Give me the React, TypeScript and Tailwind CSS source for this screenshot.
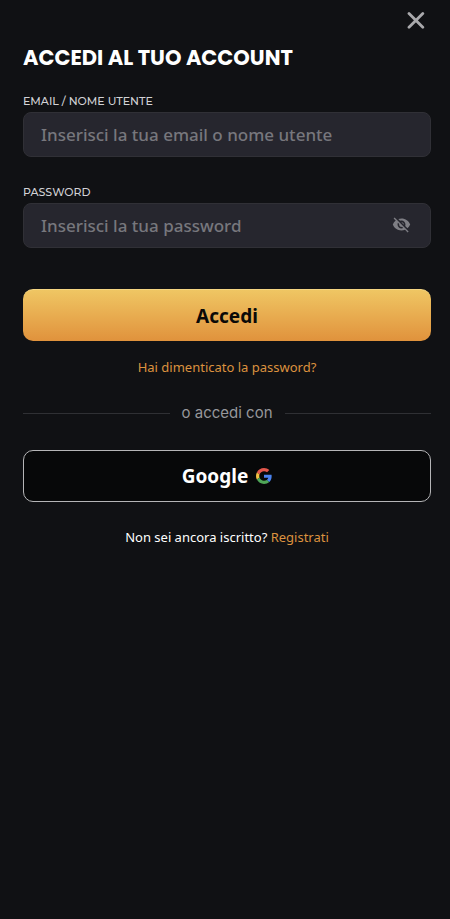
import React, { useState } from "react";
import { MdVisibility, MdVisibilityOff } from "react-icons/md";

const inputStyle =
  "block w-full h-[45px] rounded-lg border border-[#303036] bg-[#26262e] pl-[17px] text-[17px] font-medium text-white placeholder:text-[#77777d] placeholder:opacity-100 focus:outline-none focus:border-[#e0943f]";

const labelStyle =
  "block h-[22px] text-[11px] leading-[22px] font-medium font-['Montserrat','Inter',sans-serif] text-[#d2d2d6] uppercase";

const GoogleLogo = () => (
  <svg viewBox="0 0 48 48" className="w-4 h-4" aria-hidden="true">
    <path
      fill="#E2574C"
      d="M24 9.5c3.54 0 6.71 1.22 9.21 3.6l6.85-6.85C35.9 2.38 30.47 0 24 0 14.62 0 6.51 5.38 2.56 13.22l7.98 6.19C12.43 13.72 17.74 9.5 24 9.5z"
    />
    <path
      fill="#4A82EE"
      d="M46.98 24.55c0-1.57-.15-3.09-.38-4.55H24v9.02h12.94c-.58 2.96-2.26 5.48-4.78 7.18l7.73 6c4.51-4.18 7.09-10.36 7.09-17.65z"
    />
    <path
      fill="#F3C143"
      d="M10.53 28.59c-.48-1.45-.76-2.99-.76-4.59s.27-3.14.76-4.59l-7.98-6.19C.92 16.46 0 20.12 0 24c0 3.88.92 7.54 2.56 10.78l7.97-6.19z"
    />
    <path
      fill="#4FA658"
      d="M24 48c6.48 0 11.93-2.13 15.89-5.81l-7.73-6c-2.15 1.45-4.92 2.3-8.16 2.3-6.26 0-11.57-4.22-13.47-9.91l-7.98 6.19C6.51 42.62 14.62 48 24 48z"
    />
  </svg>
);

const App = () => {
  const [username, setUsername] = useState("");
  const [password, setPassword] = useState("");
  const [showPassword, setShowPassword] = useState(false);

  return (
    <div className="min-h-screen bg-[#101114] font-['Noto_Sans',sans-serif]">
      <div className="flex justify-end h-10 pr-[25px]">
        <button type="button" aria-label="Chiudi" className="cursor-pointer">
          <svg
            viewBox="0 0 18 18"
            className="w-[18px] h-[18px]"
            stroke="#a9a9ac"
            strokeWidth="2.8"
            strokeLinecap="round"
          >
            <path d="M2 2.4l13.8 13.8M15.8 2.4L2 16.2" />
          </svg>
        </button>
      </div>

      <main className="pl-[23px] pr-[19px]">
        <h1 className="h-[50px] text-[21px] leading-9 font-bold font-['Poppins','Inter',sans-serif] text-white whitespace-nowrap">
          ACCEDI AL TUO ACCOUNT
        </h1>

        <form onSubmit={(e) => e.preventDefault()}>
          <label htmlFor="username" className={labelStyle}>
            Email / Nome utente
          </label>
          <input
            id="username"
            type="text"
            value={username}
            onChange={(e) => setUsername(e.target.value)}
            placeholder="Inserisci la tua email o nome utente"
            className={`${inputStyle} pr-4`}
          />

          <label htmlFor="password" className={`${labelStyle} mt-6`}>
            Password
          </label>
          <div className="relative">
            <input
              id="password"
              type={showPassword ? "text" : "password"}
              value={password}
              onChange={(e) => setPassword(e.target.value)}
              placeholder="Inserisci la tua password"
              className={`${inputStyle} pr-12`}
            />
            <button
              type="button"
              aria-label="Mostra password"
              onClick={() => setShowPassword(!showPassword)}
              className="absolute right-5 top-3 text-[#7e7e84] cursor-pointer"
            >
              {showPassword ? (
                <MdVisibility size={19} />
              ) : (
                <MdVisibilityOff size={19} />
              )}
            </button>
          </div>

          <button
            type="submit"
            className="mt-[41px] w-full h-[52px] rounded-[10px] border-t border-[#f5d683] bg-linear-to-b from-[#efc663] to-[#e0923c] pt-px text-[19px] font-bold text-[#0b0a08] cursor-pointer"
          >
            Accedi
          </button>
        </form>

        <div className="mt-4 text-center text-[13px] leading-5">
          <a href="#" className="text-[#dc923f]">
            Hai dimenticato la password?
          </a>
        </div>

        {/* Divider */}
        <div className="mt-[26px] flex items-center gap-3 h-5">
          <span className="flex-1 h-px bg-[#2f3034]" />
          <span className="text-[15px] leading-5 font-['Inter',sans-serif] text-[#96979b]">
            o accedi con
          </span>
          <span className="flex-1 h-px bg-[#2f3034]" />
        </div>

        <button
          type="button"
          className="mt-[27px] flex w-full h-[52px] items-center justify-center gap-2 rounded-[10px] border border-[#b5b5b7] bg-[#070809] text-[19px] font-bold text-white cursor-pointer"
        >
          Google
          <GoogleLogo />
        </button>

        <p className="mt-[25px] text-center text-[13px] leading-5 text-white">
          Non sei ancora iscritto?{" "}
          <a href="#" className="text-[#dc923f]">
            Registrati
          </a>
        </p>
      </main>
    </div>
  );
};

export default App;
